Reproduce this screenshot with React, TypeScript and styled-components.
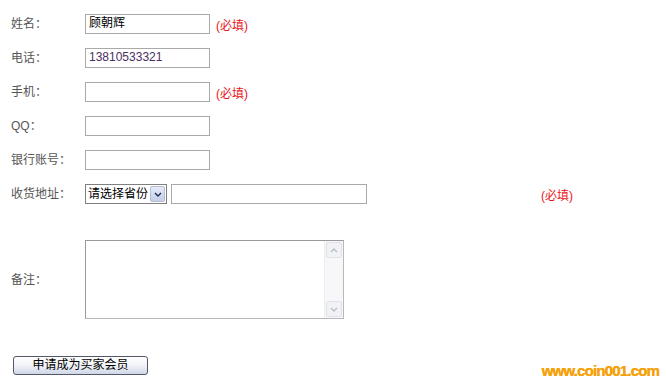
import React from 'react';
import styled, { createGlobalStyle } from 'styled-components';

const GlobalStyle = createGlobalStyle`
    html, body {
        margin: 0;
        padding: 0;
        background: #FFFFFF;
    }
    body {
        font-family: "Liberation Sans", "Noto Sans CJK SC", sans-serif;
        font-size: 12px;
    }
`;

const Page = styled.div`
    position: relative;
    width: 666px;
    height: 383px;
    padding: 7px 0 0 11px;
    box-sizing: border-box;
    overflow: hidden;
`;
const Row = styled.div<{ top?: number }>`
    display: flex;
    align-items: center;
    height: ${p => p.top ? 'auto' : '34px'};
    padding-top: ${p => p.top || 0}px;
`;
const Label = styled.div`
    width: 74px;
    flex: 0 0 74px;
    color: #555555;
    font-size: 12px;
    line-height: 14px;
`;
const Input = styled.div<{ w: number; color?: string }>`
    width: ${p => p.w}px;
    height: 20px;
    box-sizing: border-box;
    border: 1px solid #a9a9a9;
    padding: 0 3px;
    font-size: 12px;
    line-height: 17px;
    color: ${p => p.color || '#000000'};
`;
const Required = styled.span<{ gap: number }>`
    margin-left: ${p => p.gap}px;
    color: #e8141b;
    font-size: 12px;
`;
const Select = styled.div`
    display: flex;
    align-items: stretch;
    width: 82px;
    height: 20px;
    box-sizing: border-box;
    border: 1px solid #7f7f7f;
    margin-right: 4px;
`;
const SelectText = styled.div`
    flex: 1;
    min-width: 0;
    padding-left: 2px;
    font-size: 12px;
    line-height: 18px;
    color: #000000;
    white-space: nowrap;
    overflow: hidden;
`;
const SelectArrow = styled.div`
    flex: 0 0 15px;
    margin: 1px;
    box-sizing: border-box;
    border: 1px solid #b6bdd2;
    border-radius: 2px;
    background: linear-gradient(#e6ebf8, #c5cfe9);
    display: flex;
    align-items: center;
    justify-content: center;
`;
const AreaBox = styled.div`
    display: flex;
    width: 259px;
    height: 79px;
    box-sizing: border-box;
    border: 1px solid #b8b8b8;
    border-top-color: #9a9a9a;
    border-left-color: #9a9a9a;
`;
const AreaField = styled.div`
    flex: 1;
`;
const ScrollBar = styled.div`
    width: 16px;
    display: flex;
    flex-direction: column;
    justify-content: space-between;
    background: #f7f7f9;
    border-left: 1px solid #eeeeee;
    padding: 1px;
`;
const ScrollBtn = styled.div`
    height: 16px;
    box-sizing: border-box;
    border: 1px solid #e2e2e6;
    border-radius: 2px;
    background: #f1f2f5;
    display: flex;
    align-items: center;
    justify-content: center;
`;
const SubmitRow = styled.div`
    padding: 37px 0 0 2px;
`;
const SubmitButton = styled.button`
    width: 135px;
    height: 19px;
    padding: 0;
    border: 1px solid #52586a;
    border-radius: 3px;
    background: linear-gradient(#ffffff 0%, #f1f3f8 50%, #cfd6e6 100%);
    font-family: "Liberation Sans", "Noto Sans CJK SC", sans-serif;
    font-size: 12px;
    line-height: 15px;
    color: #000000;
`;
const Watermark = styled.div`
    position: absolute;
    right: 7px;
    bottom: 4px;
    font-family: "Liberation Sans", "DejaVu Sans", sans-serif;
    font-weight: bold;
    font-size: 15px;
    letter-spacing: -0.8px;
    color: #f5a20a;
    text-shadow: 0.4px 0 0 #f5a20a;
`;

const Chevron = ({ dir, color }: { dir: 'up' | 'down'; color: string }) => (
    <svg width="8" height="5" viewBox="0 0 8 5">
        <path d={dir === 'down' ? 'M1 1 L4 4 L7 1' : 'M1 4 L4 1 L7 4'} stroke={color} strokeWidth="1.4" fill="none" />
    </svg>
);

const App = () => {
    return (
        <Page>
            <GlobalStyle />
            <Row>
                <Label>姓名：</Label>
                <Input w={125}>顾朝辉</Input>
                <Required gap={6}>(必填)</Required>
            </Row>
            <Row>
                <Label>电话：</Label>
                <Input w={125} color="#4b2e63">13810533321</Input>
            </Row>
            <Row>
                <Label>手机：</Label>
                <Input w={125} />
                <Required gap={6}>(必填)</Required>
            </Row>
            <Row>
                <Label>QQ：</Label>
                <Input w={125} />
            </Row>
            <Row>
                <Label>银行账号：</Label>
                <Input w={125} />
            </Row>
            <Row>
                <Label>收货地址：</Label>
                <Select>
                    <SelectText>请选择省份</SelectText>
                    <SelectArrow><Chevron dir="down" color="#1d2a55" /></SelectArrow>
                </Select>
                <Input w={196} />
                <Required gap={174}>(必填)</Required>
            </Row>
            <Row top={29}>
                <Label>备注：</Label>
                <AreaBox>
                    <AreaField />
                    <ScrollBar>
                        <ScrollBtn><Chevron dir="up" color="#b9bcc8" /></ScrollBtn>
                        <ScrollBtn><Chevron dir="down" color="#b9bcc8" /></ScrollBtn>
                    </ScrollBar>
                </AreaBox>
            </Row>
            <SubmitRow>
                <SubmitButton>申请成为买家会员</SubmitButton>
            </SubmitRow>
            <Watermark>www.coin001.com</Watermark>
        </Page>
    );
};
export default App;
